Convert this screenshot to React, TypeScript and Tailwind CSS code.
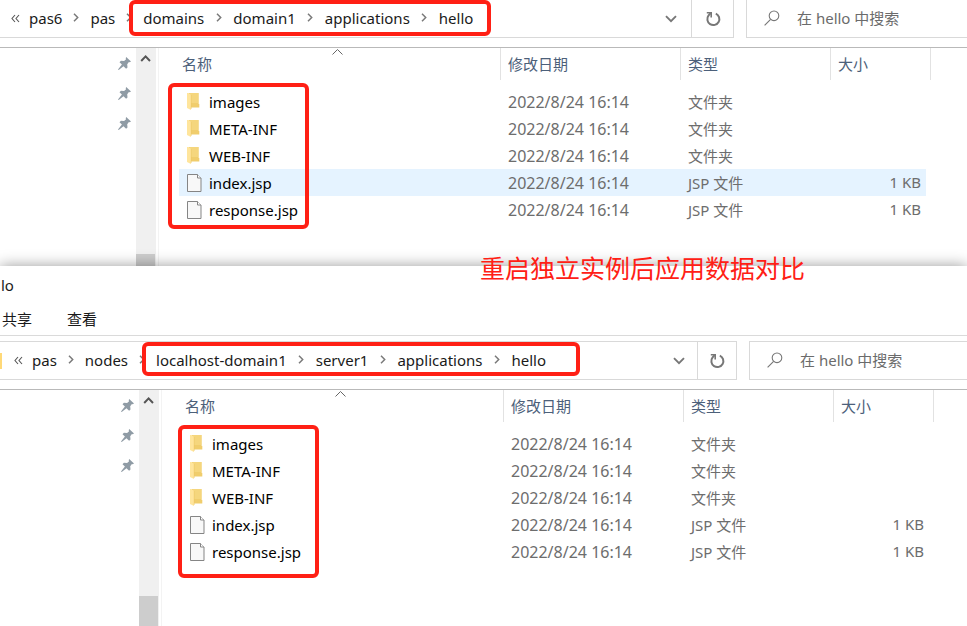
import clsx from "clsx";

interface FileEntry {
  name: string;
  type: string;
  size?: string;
}

const DATE = "2022/8/24 16:14";

const FILES: FileEntry[] = [
  { name: "images", type: "文件夹" },
  { name: "META-INF", type: "文件夹" },
  { name: "WEB-INF", type: "文件夹" },
  { name: "index.jsp", type: "JSP 文件", size: "1 KB" },
  { name: "response.jsp", type: "JSP 文件", size: "1 KB" },
];

function FolderIcon() {
  return (
    <svg width="15" height="18" viewBox="0 0 15 18" className="block">
      <path d="M2 0h9.5v10.5l.8.5v3.5H4z" fill="#f0cd6c" />
      <path d="M3 0h8.5v10H3z" fill="#f5d67d" />
      <path d="M0 0h1.5L4 2v15L0 15z" fill="#ffe59c" />
      <path d="M4.2 2V16" stroke="#edc968" strokeWidth="0.6" />
    </svg>
  );
}

function FileIcon() {
  return (
    <svg width="15" height="18" viewBox="0 0 15 18" className="block">
      <path d="M.5.5h10l3.5 3.5v13.5H.5z" fill="#f8f8f8" stroke="#858585" />
      <path d="M10.5.5V4H14" fill="#fff" stroke="#858585" />
    </svg>
  );
}

function PinIcon() {
  return (
    <svg width="13" height="13" viewBox="0 0 13 13" className="block">
      <path
        d="M8.2 0L13 4.4l-1.3.9-.8-.2-1.7 2.1.3 3.2-1.4 1.4-2.6-2.5L.7 13 0 12.4l3.9-4.8L1.5 5.2l1.4-1.4 3.2.2 2-1.8-.4-1z"
        fill="#8f9ba5"
      />
    </svg>
  );
}

function Chevron() {
  return (
    <svg width="6" height="9" viewBox="0 0 6 9">
      <path d="M1 .8l3.7 3.7L1 8.2" fill="none" stroke="#7a7a7a" strokeWidth="1.5" />
    </svg>
  );
}

function RefreshIcon() {
  return (
    <svg width="16" height="16" viewBox="0 0 16 16" className="block">
      <path
        d="M10.8 2.6A6 6 0 1 1 3.6 4.4L5.6 2.2"
        fill="none"
        stroke="#777"
        strokeWidth="2"
      />
      <path d="M1.8 1.8H6.2V6.4" fill="none" stroke="#777" strokeWidth="1.6" />
    </svg>
  );
}

function SearchIcon() {
  return (
    <svg width="16" height="16" viewBox="0 0 16 16" className="block shrink-0">
      <circle cx="10" cy="5.8" r="4.8" fill="none" stroke="#777" strokeWidth="1.1" />
      <path d="M6.6 9.3L.6 15.3" stroke="#777" strokeWidth="1.2" />
    </svg>
  );
}

interface CrumbsProps {
  labels: string[];
  // the trail ends here, so no chevron after the last label
  end?: boolean;
}

function Crumbs({ labels, end }: CrumbsProps) {
  return (
    <ol className="flex">
      {labels.map((label, i) => (
        <li key={label} className="flex items-center">
          <button type="button" className="whitespace-nowrap">
            {label}
          </button>
          {!(end && i === labels.length - 1) && (
            <span
              className={clsx("flex justify-center", end ? "w-[29px]" : "w-7")}
            >
              <Chevron />
            </span>
          )}
        </li>
      ))}
    </ol>
  );
}

interface AddressBarProps {
  parents: string[];
  marked: string[];
  lower?: boolean;
}

function AddressBar({ parents, marked, lower }: AddressBarProps) {
  return (
    <div className={clsx("flex gap-3", lower ? "mt-[5px] h-[39px]" : "h-[38px]")}>
      <div
        className={clsx(
          "flex min-w-0 border-b border-r border-[#d9d9d9]",
          lower ? "w-[737px] border-t" : "w-[734px]"
        )}
      >
        <nav
          aria-label="Path"
          className={clsx("flex flex-1 items-center", !lower && "pl-[11px]")}
        >
          {lower && <span className="mr-3 h-4 w-[2px] bg-[#ffd978]" />}
          <svg width="9" height="9" viewBox="0 0 9 9" className="mr-[9px]">
            <path
              d="M4 1L1 4.5 4 8M8 1L5 4.5 8 8"
              fill="none"
              stroke="#555"
              strokeWidth="1.1"
            />
          </svg>
          <div className="pb-[2px]">
            <Crumbs labels={parents} />
          </div>
          <div className="relative flex h-full items-center pb-[2px] pr-[18px]">
            <Crumbs labels={marked} end />
            <div
              className={clsx(
                "pointer-events-none absolute -left-[14px] top-0 rounded-md border-4 border-[#ff2015]",
                lower ? "-right-4 h-[34px]" : "right-0 h-9"
              )}
            />
          </div>
        </nav>
        <button
          type="button"
          aria-label="Recent locations"
          className={clsx("flex items-center justify-center", lower ? "w-9" : "w-10")}
        >
          <svg width="12" height="8" viewBox="0 0 12 8">
            <path d="M1 1.2l5 5 5-5" fill="none" stroke="#777" strokeWidth="1.9" />
          </svg>
        </button>
        <button
          type="button"
          aria-label="Refresh"
          className={clsx(
            "flex items-center justify-center border-l border-[#d9d9d9]",
            lower ? "w-[39px]" : "w-[42px]"
          )}
        >
          <RefreshIcon />
        </button>
      </div>
      <label
        className={clsx(
          "flex min-w-0 flex-1 items-center gap-[17px] border-b border-l border-[#d9d9d9] pb-[2px] pl-[17px]",
          lower && "border-t"
        )}
      >
        <SearchIcon />
        <input
          type="search"
          aria-label="在 hello 中搜索"
          placeholder="在 hello 中搜索"
          className="w-full min-w-0 bg-transparent outline-none placeholder:text-[#6b6b6b]"
        />
      </label>
    </div>
  );
}

function FileTable({ selected }: { selected?: string }) {
  return (
    <table className="w-[752px] table-fixed border-collapse text-left text-[#6d6d6d]">
      <colgroup>
        <col className="w-[322px]" />
        <col className="w-[180px]" />
        <col className="w-[150px]" />
        <col className="w-[100px]" />
      </colgroup>
      <thead>
        <tr className="text-[#4c607a]">
          {["名称", "修改日期", "类型", "大小"].map((label, i) => (
            <th key={label} scope="col" className="p-0 pb-2 font-normal">
              <div
                className={clsx(
                  "relative flex h-8 items-center border-r border-[#e2e2e2]",
                  i === 0 ? "pl-[3px]" : "pl-[7px]"
                )}
              >
                {label}
                {i === 0 && (
                  <svg
                    width="11"
                    height="6"
                    viewBox="0 0 11 6"
                    className="absolute left-[153px] top-px"
                  >
                    <path d="M.5 5.5l5-5 5 5" fill="none" stroke="#666" />
                  </svg>
                )}
              </div>
            </th>
          ))}
        </tr>
      </thead>
      <tbody>
        {FILES.map((file) => {
          const bg = file.name === selected && "bg-[#e5f3ff]";
          return (
            <tr key={file.name}>
              <td className={clsx("h-[27px] p-0", bg)}>
                <div className="flex items-center gap-[7px] pl-2 text-black">
                  {file.size ? <FileIcon /> : <FolderIcon />}
                  {file.name}
                </div>
              </td>
              <td className={clsx("p-0 pl-[7px] text-base leading-5", bg)}>{DATE}</td>
              <td className={clsx("p-0 pl-[7px]", bg)}>{file.type}</td>
              <td className="p-0 pr-[5px]">
                <div className={clsx("h-[27px] pr-[5px] text-right leading-[27px]", bg)}>
                  {file.size}
                </div>
              </td>
            </tr>
          );
        })}
      </tbody>
    </table>
  );
}

interface FileAreaProps {
  lower?: boolean;
  selected?: string;
}

function FileArea({ lower, selected }: FileAreaProps) {
  return (
    <div className="mt-[9px] flex flex-1 border-t border-[#b9b9b9]">
      <div
        className={clsx(
          "flex shrink-0 flex-col items-end gap-[17px] pr-[5px] pt-[9px]",
          lower ? "w-[139px]" : "w-[136px]"
        )}
      >
        <PinIcon />
        <PinIcon />
        <PinIcon />
      </div>
      <div className="mr-[2px] flex w-5 shrink-0 flex-col justify-between bg-[#f0f0f0]">
        <svg width="20" height="20" viewBox="0 0 20 20">
          <path d="M5.2 13l4.4-4.6L14 13" fill="none" stroke="#555" strokeWidth="2" />
        </svg>
        <div className={clsx("mr-px bg-[#cdcdcd]", lower ? "h-[30px]" : "h-3")} />
      </div>
      <div
        className={clsx(
          "min-w-0 flex-1 border-l border-[#f3f3f3] pl-5",
          !lower && "pb-[43px]"
        )}
      >
        <FileTable selected={selected} />
      </div>
    </div>
  );
}

export default function App() {
  return (
    <div className="flex min-h-screen flex-col overflow-hidden bg-white font-['Noto_Sans','Noto_Sans_CJK_SC',sans-serif] text-[15px] leading-5 text-[#1a1a1a]">
      <section className="flex flex-col">
        <AddressBar
          parents={["pas6", "pas"]}
          marked={["domains", "domain1", "applications", "hello"]}
        />
        <div className="relative flex">
          <FileArea selected="index.jsp" />
          <div className="pointer-events-none absolute left-[168px] top-[45px] h-[146px] w-[141px] rounded-md border-4 border-[#ff2015]" />
        </div>
      </section>

      <section className="relative flex flex-1 flex-col bg-white shadow-[0_0_14px_rgba(0,0,0,0.4)]">
        <p className="absolute -top-4 left-[480px] whitespace-nowrap text-[25px] leading-9 text-[#ff2015]">
          重启独立实例后应用数据对比
        </p>
        <h1 className="pl-px pt-[9px]">lo</h1>
        <div className="flex gap-[35px] border-b border-[#dadada] pb-[6px] pl-[2px] pt-[14px]">
          <button type="button">共享</button>
          <button type="button">查看</button>
        </div>
        <AddressBar
          lower
          parents={["pas", "nodes"]}
          marked={["localhost-domain1", "server1", "applications", "hello"]}
        />
        <div className="relative flex flex-1">
          <FileArea lower />
          <div className="pointer-events-none absolute left-[178px] top-[45px] h-[153px] w-[141px] rounded-md border-4 border-[#ff2015]" />
        </div>
      </section>
    </div>
  );
}
